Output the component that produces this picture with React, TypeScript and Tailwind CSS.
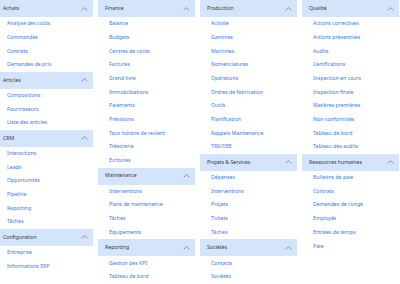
import React from "react";

type Section = { title: string; items: string[] };

const columns: Section[][] = [
  [
    { title: "Achats", items: ["Analyse des coûts", "Commandes", "Contrats", "Demandes de prix"] },
    { title: "Articles", items: ["Compositions", "Fournisseurs", "Liste des articles"] },
    { title: "CRM", items: ["Interactions", "Leads", "Opportunités", "Pipeline", "Reporting", "Tâches"] },
    { title: "Configuration", items: ["Entreprise", "Informations ERP"] },
  ],
  [
    {
      title: "Finance",
      items: [
        "Balance",
        "Budgets",
        "Centres de coûts",
        "Factures",
        "Grand livre",
        "Immobilisations",
        "Paiements",
        "Prévisions",
        "Taux horaire de revient",
        "Trésorerie",
        "Écritures",
      ],
    },
    { title: "Maintenance", items: ["Interventions", "Plans de maintenance", "Tâches", "Équipements"] },
    { title: "Reporting", items: ["Gestion des KPI", "Tableau de bord"] },
  ],
  [
    {
      title: "Production",
      items: [
        "Activité",
        "Gammes",
        "Machines",
        "Nomenclatures",
        "Opérations",
        "Ordres de fabrication",
        "Outils",
        "Planification",
        "Rappels Maintenance",
        "TRS/OEE",
      ],
    },
    { title: "Projets & Services", items: ["Dépenses", "Interventions", "Projets", "Tickets", "Tâches"] },
    { title: "Sociétés", items: ["Contacts", "Sociétés"] },
  ],
  [
    {
      title: "Qualité",
      items: [
        "Actions correctives",
        "Actions préventives",
        "Audits",
        "Certifications",
        "Inspection en cours",
        "Inspection finale",
        "Matières premières",
        "Non-conformités",
        "Tableau de bord",
        "Tableau des audits",
      ],
    },
    {
      title: "Ressources humaines",
      items: ["Bulletins de paie", "Contrats", "Demandes de congé", "Employés", "Entrées de temps", "Paie"],
    },
  ],
];

const Chevron = () => (
  <svg width="7" height="4" viewBox="0 0 7 4" fill="none" className="shrink-0">
    <path d="M0.7 3.3 L3.5 0.7 L6.3 3.3" stroke="#6b7280" strokeWidth="0.7" />
  </svg>
);

const MenuSection = ({ section }: { section: Section }) => (
  <div>
    <div className="flex h-[17px] items-center justify-between bg-[#d4e4fb] pl-[7px] pr-[5px] text-[#3a3a3a]">
      <span>{section.title}</span>
      <Chevron />
    </div>
    <ul>
      {section.items.map((item, idx) => (
        <li key={idx} className="flex h-[13.7px] items-center pl-[11px] text-[#3b78e7]">
          {item}
        </li>
      ))}
    </ul>
  </div>
);

export default function App() {
  return (
    <div className="h-[284px] w-[400px] overflow-hidden bg-white font-['Segoe_UI','Noto_Sans',sans-serif] text-[5.2px] leading-none">
      <div className="-ml-[4px] grid grid-cols-[repeat(4,97px)] items-start gap-x-[5px]">
        {columns.map((col, idx) => (
          <div key={idx} className="flex flex-col">
            {col.map((section) => (
              <MenuSection key={section.title} section={section} />
            ))}
          </div>
        ))}
      </div>
    </div>
  );
}
